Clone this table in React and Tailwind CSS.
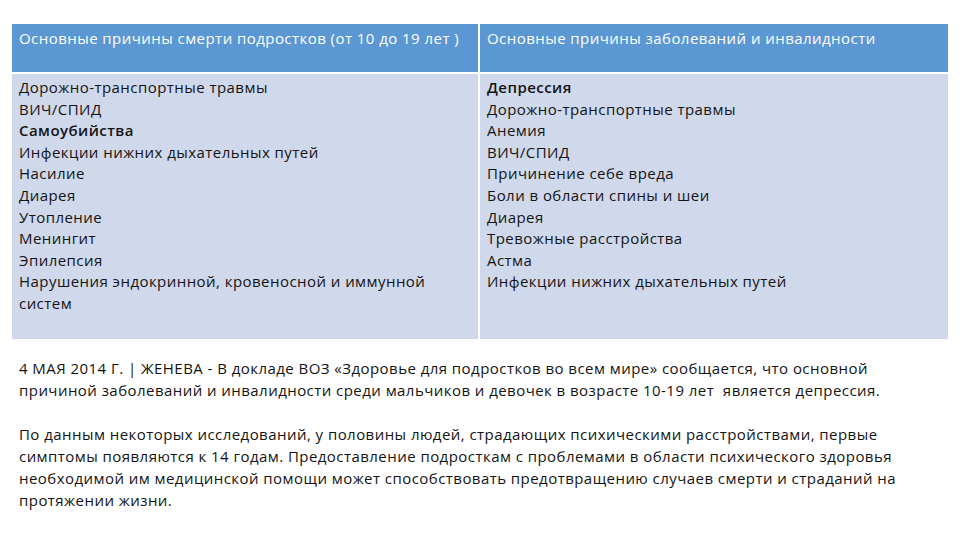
export default function App() {
  const left = [
    ["Дорожно-транспортные травмы", false],
    ["ВИЧ/СПИД", false],
    ["Самоубийства", true],
    ["Инфекции нижних дыхательных путей", false],
    ["Насилие", false],
    ["Диарея", false],
    ["Утопление", false],
    ["Менингит", false],
    ["Эпилепсия", false],
    ["Нарушения эндокринной, кровеносной и иммунной", false],
    ["систем", false],
  ];
  const right = [
    ["Депрессия", true],
    ["Дорожно-транспортные травмы", false],
    ["Анемия", false],
    ["ВИЧ/СПИД", false],
    ["Причинение себе вреда", false],
    ["Боли в области спины и шеи", false],
    ["Диарея", false],
    ["Тревожные расстройства", false],
    ["Астма", false],
    ["Инфекции нижних дыхательных путей", false],
  ];
  return (
    <div
      className="w-[960px] h-[540px] bg-white text-[#141414] overflow-hidden tracking-[0.45px]"
      style={{ fontFamily: '"Open Sans", "Noto Sans", sans-serif' }}
    >
      <div className="pt-[24px] pl-[12px] w-[948px]">
        <div className="grid grid-cols-[466px_468px] gap-x-[2px] gap-y-[2px] bg-white">
          <div className="bg-[#5b97d2] h-[48px] pl-[7px] pt-[3px] text-white text-[15px] leading-[22px] whitespace-nowrap">
            Основные причины смерти подростков (от 10 до 19 лет )
          </div>
          <div className="bg-[#5b97d2] h-[48px] pl-[7px] pt-[3px] text-white text-[15px] leading-[22px] whitespace-nowrap">
            Основные причины заболеваний и инвалидности
          </div>
          <div className="bg-[#d0d8eb] h-[265px] pl-[7px] pt-[3px] text-[15px] leading-[21.6px] whitespace-nowrap">
            {left.map(([t, b]) => (
              <div key={t} className={b ? "font-semibold" : ""}>{t}</div>
            ))}
          </div>
          <div className="bg-[#d0d8eb] h-[265px] pl-[7px] pt-[3px] text-[15px] leading-[21.6px] whitespace-nowrap">
            {right.map(([t, b]) => (
              <div key={t} className={b ? "font-semibold" : ""}>{t}</div>
            ))}
          </div>
        </div>
        <div className="pl-[7px] pt-[18px] text-[15px] leading-[22px] whitespace-nowrap">
          <p>
            4 МАЯ 2014 Г. | ЖЕНЕВА - В докладе ВОЗ «Здоровье для подростков во всем мире» сообщается, что основной
            <br />
            причиной заболеваний и инвалидности среди мальчиков и девочек в возрасте 10-19 лет&nbsp; является депрессия.
          </p>
          <p className="mt-[22px]">
            По данным некоторых исследований, у половины людей, страдающих психическими расстройствами, первые
            <br />
            симптомы появляются к 14 годам. Предоставление подросткам с проблемами в области психического здоровья
            <br />
            необходимой им медицинской помощи может способствовать предотвращению случаев смерти и страданий на
            <br />
            протяжении жизни.
          </p>
        </div>
      </div>
    </div>
  );
}
